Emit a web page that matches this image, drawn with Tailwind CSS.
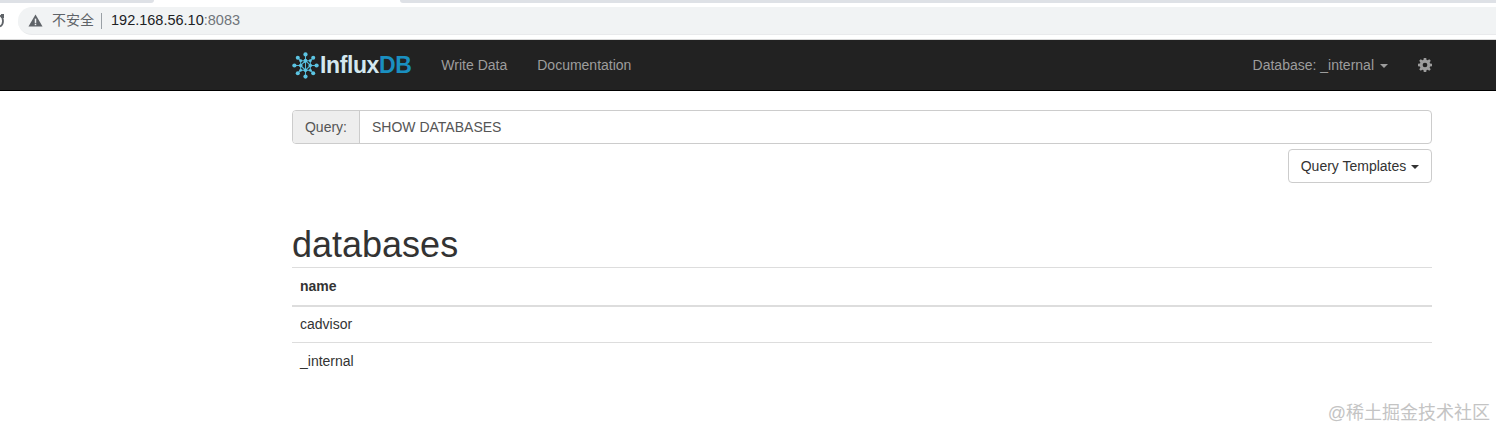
<!DOCTYPE html>
<html lang="en">
<head>
  <meta charset="UTF-8" />
  <title>InfluxDB</title>
  <script src="https://cdn.jsdelivr.net/npm/@tailwindcss/browser@4"></script>
</head>
<body class="relative h-[429px] w-[1496px] overflow-hidden bg-white font-['Liberation_Sans','Noto_Sans_CJK_SC',sans-serif] text-[14px] text-[#333]">

  <!-- Browser chrome -->
  <div class="h-[40px] border-b border-[#d8d8d8] bg-white">
    <div class="flex h-[3px] justify-between">
      <span class="w-[154px] rounded-br-[3px] bg-[#dee1e6]"></span>
      <span class="w-[1096px] rounded-bl-[3px] bg-[#dee1e6]"></span>
    </div>
    <div class="mt-[4px] flex h-[28px] items-center">
      <svg class="h-[14px] w-[4px] shrink-0" viewBox="0 0 4 14" fill="none"><path d="M0 1.5C2 2.5 3 4.5 3 7c0 2.5-1 4.5-3 5.5" stroke="#5f6368" stroke-width="1.8"/><path d="M1 0h3v4H1Z" fill="#5f6368"/></svg>
      <div class="ml-[14px] flex h-[28px] flex-1 items-center rounded-l-full border-b border-[#e9eaec] bg-[#f1f3f4] pl-[10px]">
        <svg class="h-[15px] w-[15px]" viewBox="0 0 16 16"><path d="M8 1.5 15.5 14.5H.5Z" fill="#5f6368"/><rect x="7.2" y="6" width="1.6" height="4.6" fill="#f1f3f4"/><rect x="7.2" y="11.4" width="1.6" height="1.6" fill="#f1f3f4"/></svg>
        <span class="ml-[9px] text-[14px] text-[#5f6368]">不安全</span>
        <span class="ml-[7px] h-[16px] w-px bg-[#9aa0a6]"></span>
        <span class="ml-[9px] text-[14.5px] text-[#202124]">192.168.56.10<span class="text-[#70757a]">:8083</span></span>
      </div>
    </div>
  </div>

  <!-- Navbar -->
  <nav class="h-[51px] border-b border-black bg-[#222]">
    <div class="ml-[292px] flex h-[50px] w-[1140px] items-center">
      <svg class="h-[27px] w-[27px]" viewBox="0 0 28 28" fill="none">
        <g stroke="#4fb6d6" stroke-width="1.1">
          <path d="M14 2.5V9L9 14 2.5 14M14 9 19 14H25.5M9 14 14 19V25.5M19 14 14 19M6 6 9 9 14 9M22 6 19 9 14 9M6 22 9 19 14 19M22 22 19 19 14 19M9 9 9 14 9 19M19 9 19 14 19 19M14 9 14 19"/>
        </g>
        <g fill="#5cc4e2">
          <circle cx="14" cy="2.5" r="2.2"/><circle cx="14" cy="25.5" r="2.2"/><circle cx="2.5" cy="14" r="2.2"/><circle cx="25.5" cy="14" r="2.2"/>
          <circle cx="6" cy="6" r="2.1"/><circle cx="22" cy="6" r="2.1"/><circle cx="6" cy="22" r="2.1"/><circle cx="22" cy="22" r="2.1"/>
          <circle cx="14" cy="9" r="1.9"/><circle cx="14" cy="19" r="1.9"/><circle cx="9" cy="14" r="1.9"/><circle cx="19" cy="14" r="1.9"/>
          <circle cx="9" cy="9" r="1.5"/><circle cx="19" cy="9" r="1.5"/><circle cx="9" cy="19" r="1.5"/><circle cx="19" cy="19" r="1.5"/>
        </g>
      </svg>
      <span class="ml-px text-[23px] font-bold tracking-[-0.4px] text-[#d4e8ef]">Influx<span class="text-[#1a8fc0]">DB</span></span>
      <a class="ml-[30px] text-[#9d9d9d]">Write Data</a>
      <a class="ml-[30px] text-[#9d9d9d]">Documentation</a>
      <a class="ml-auto flex items-center text-[#9d9d9d]">Database: _internal<span class="ml-[6px] mt-px border-x-[4px] border-t-[4px] border-x-transparent border-t-[#9d9d9d]"></span></a>
      <svg class="ml-[30px] h-[14px] w-[14px]" viewBox="0 0 16 16" fill="#9d9d9d"><path fill-rule="evenodd" d="M6.6 0h2.8l.4 2.2 1.2.5L12.9 1.4 14.6 3.1 13.3 5l.5 1.2 2.2.4v2.8l-2.2.4-.5 1.2 1.3 1.9-1.7 1.7L11 13.3l-1.2.5-.4 2.2H6.6l-.4-2.2-1.2-.5-1.9 1.3L1.4 12.9 2.7 11l-.5-1.2L0 9.4V6.6l2.2-.4.5-1.2L1.4 3.1 3.1 1.4 5 2.7l1.2-.5ZM8 5.3a2.7 2.7 0 1 0 0 5.4 2.7 2.7 0 0 0 0-5.4Z"/></svg>
    </div>
  </nav>

  <!-- Content -->
  <main class="ml-[292px] w-[1140px] pt-[19px]">
    <div class="flex h-[34px] rounded-[4px] border border-[#ccc]">
      <span class="flex w-[67px] items-center justify-center rounded-l-[3px] border-r border-[#ccc] bg-[#eee] text-[#555]">Query:</span>
      <span class="flex flex-1 items-center pl-[12px] text-[#555]">SHOW DATABASES</span>
    </div>
    <div class="mt-[5px] flex justify-end">
      <button class="flex h-[34px] w-[144px] items-center justify-center rounded-[4px] border border-[#ccc] text-[#333]">Query Templates<span class="ml-[5px] mt-px border-x-[4px] border-t-[4px] border-x-transparent border-t-[#333]"></span></button>
    </div>
    <h1 class="mt-[42px] h-[42px] text-[36px] leading-[40px] font-normal text-[#333]">databases</h1>
    <table class="w-full border-collapse">
      <thead>
        <tr class="h-[38px] border-t border-b-2 border-t-[#ddd] border-b-[#ddd]"><th class="px-[8px] text-left font-bold">name</th></tr>
      </thead>
      <tbody>
        <tr class="h-[37px] border-b border-[#ddd]"><td class="px-[8px]">cadvisor</td></tr>
        <tr class="h-[37px]"><td class="px-[8px]">_internal</td></tr>
      </tbody>
    </table>
  </main>

  <!-- Watermark -->
  <div class="absolute right-[6px] top-[402px] text-[18px] leading-[22px] text-[#c4c4c4]">@稀土掘金技术社区</div>
</body>
</html>
